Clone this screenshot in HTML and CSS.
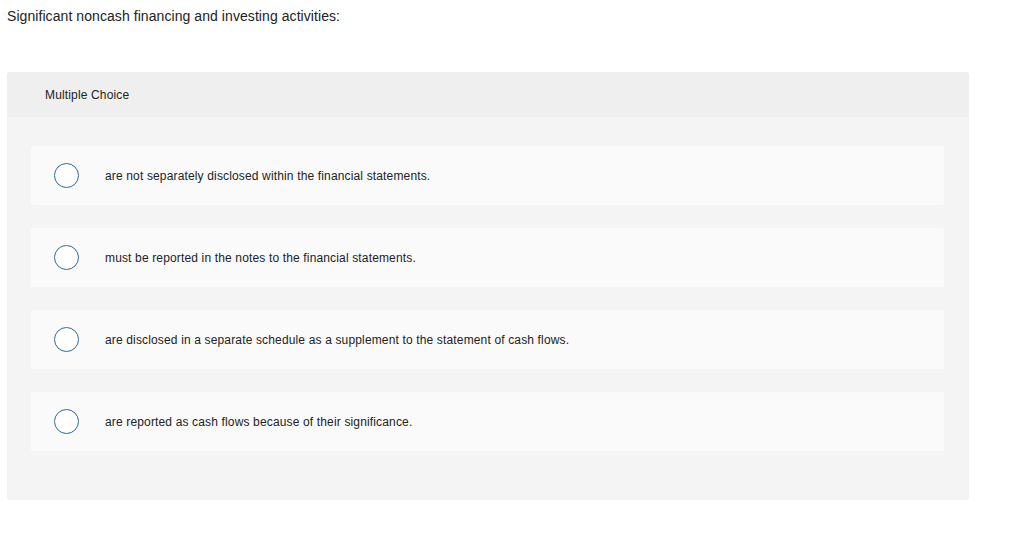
FILE: index.html
```html
<!DOCTYPE html>
<html>
<head>
<meta charset="utf-8">
<link rel="stylesheet" href="styles.css">
</head>
<body>
<p class="prompt">Significant noncash financing and investing activities:</p>
<div class="panel">
  <div class="panel-head">Multiple Choice</div>
  <div class="options">
    <div class="option"><span class="radio"></span><span class="label">are not separately disclosed within the financial statements.</span></div>
    <div class="option"><span class="radio"></span><span class="label">must be reported in the notes to the financial statements.</span></div>
    <div class="option"><span class="radio"></span><span class="label">are disclosed in a separate schedule as a supplement to the statement of cash flows.</span></div>
    <div class="option"><span class="radio"></span><span class="label">are reported as cash flows because of their significance.</span></div>
  </div>
</div>
</body>
</html>
```
FILE: styles.css
```css
body {
  margin: 0;
  padding: 0 0 0 7px;
  font-family: "Liberation Sans", Arial, sans-serif;
  color: #222;
  background: #fff;
}
.prompt {
  margin: 0;
  padding-top: 7px;
  font-size: 14px;
  letter-spacing: 0.07px;
  line-height: 18px;
  height: 65px;
}
.panel {
  width: 962px;
  background: #f4f4f4;
  border-radius: 3px;
}
.panel-head {
  background: #efefef;
  height: 45px;
  box-sizing: border-box;
  padding-top: 2px;
  line-height: 43px;
  padding-left: 38px;
  font-size: 12px;
  letter-spacing: 0.15px;
  border-radius: 3px 3px 0 0;
}
.options {
  padding: 29px 25px 49px 24px;
  display: flex;
  flex-direction: column;
  gap: 23px;
}
.option {
  background: #fafafa;
  height: 59px;
  border-radius: 2px;
  display: flex;
  align-items: center;
}
.radio {
  box-sizing: border-box;
  width: 25px;
  height: 25px;
  border: 1px solid #2b6aa0;
  border-radius: 50%;
  background: #fff;
  margin-left: 23px;
  margin-right: 26px;
  flex: none;
}
.label {
  font-size: 12px;
  letter-spacing: 0.15px;
}
```
